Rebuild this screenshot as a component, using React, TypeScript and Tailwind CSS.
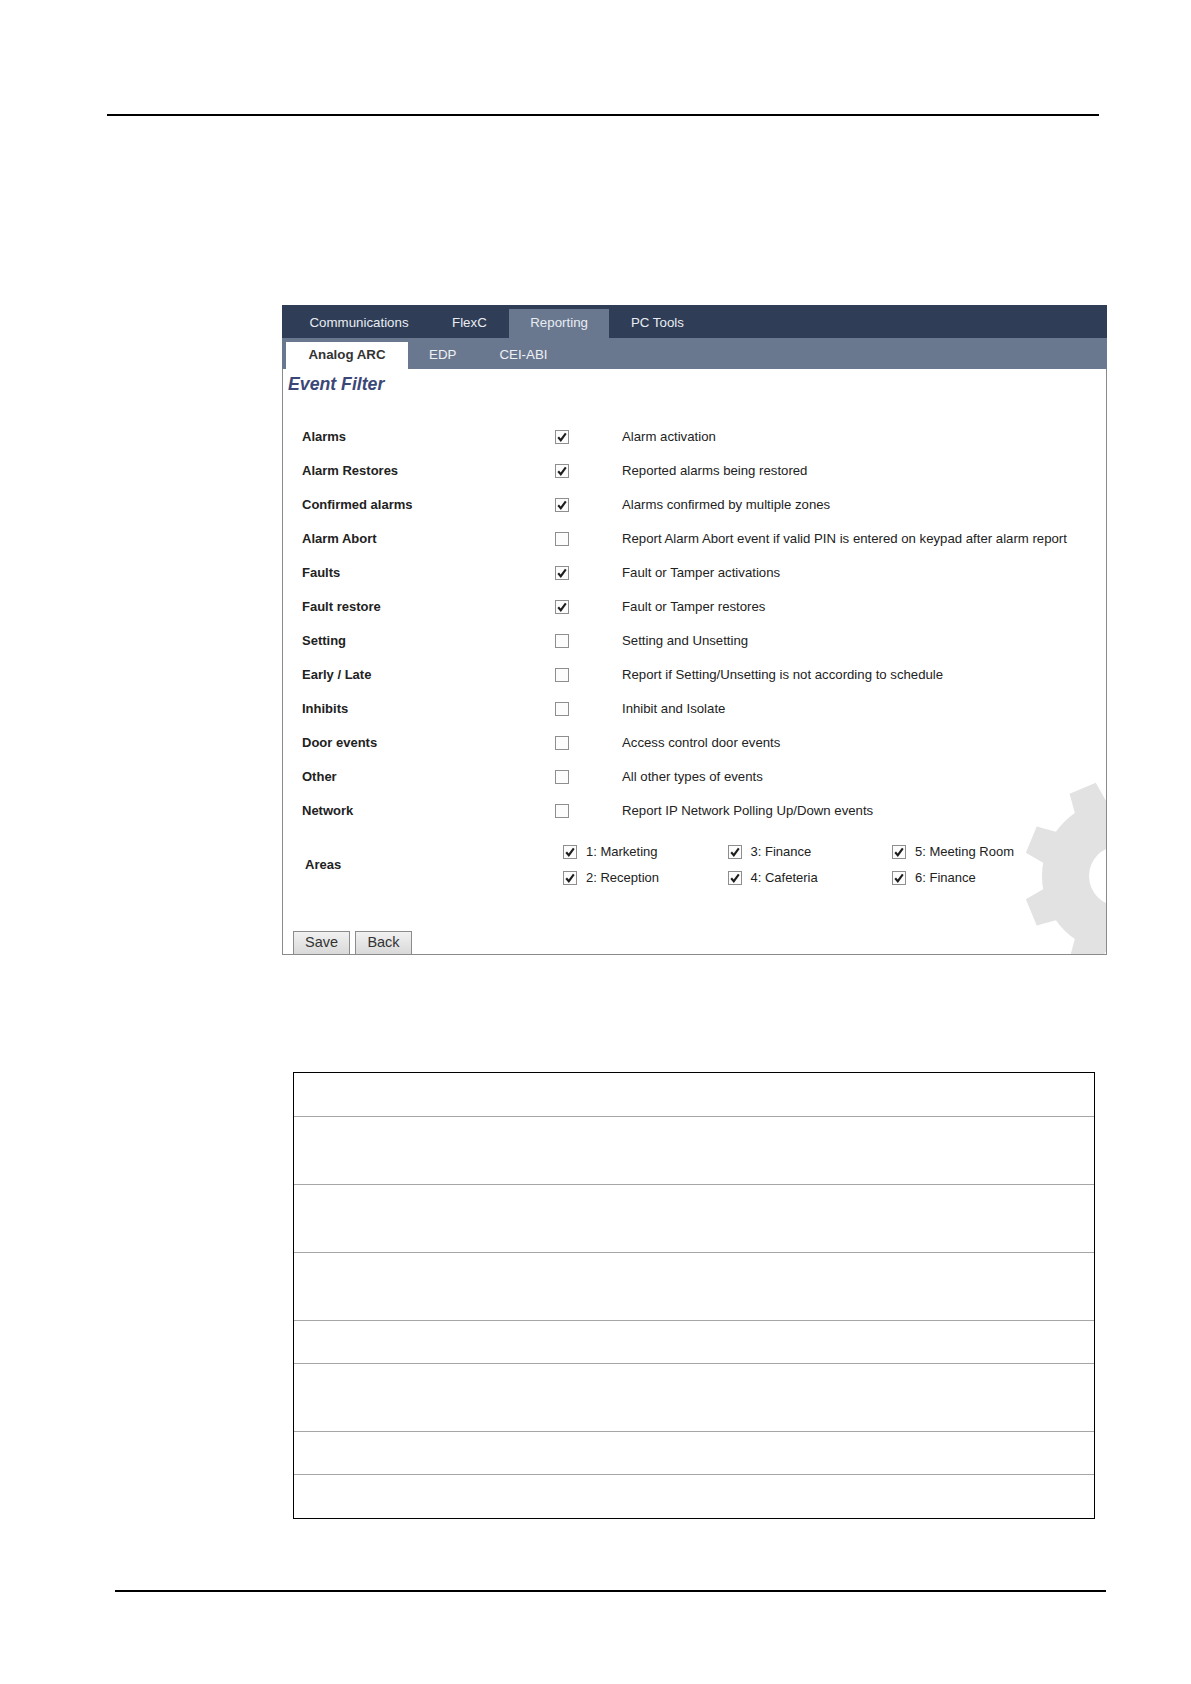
import React from "react";

const rows = [
  { label: "Alarms", checked: true, desc: "Alarm activation" },
  { label: "Alarm Restores", checked: true, desc: "Reported alarms being restored" },
  { label: "Confirmed alarms", checked: true, desc: "Alarms confirmed by multiple zones" },
  { label: "Alarm Abort", checked: false, desc: "Report Alarm Abort event if valid PIN is entered on keypad after alarm report" },
  { label: "Faults", checked: true, desc: "Fault or Tamper activations" },
  { label: "Fault restore", checked: true, desc: "Fault or Tamper restores" },
  { label: "Setting", checked: false, desc: "Setting and Unsetting" },
  { label: "Early / Late", checked: false, desc: "Report if Setting/Unsetting is not according to schedule" },
  { label: "Inhibits", checked: false, desc: "Inhibit and Isolate" },
  { label: "Door events", checked: false, desc: "Access control door events" },
  { label: "Other", checked: false, desc: "All other types of events" },
  { label: "Network", checked: false, desc: "Report IP Network Polling Up/Down events" },
];

const areas = [
  ["1: Marketing", "3: Finance", "5: Meeting Room"],
  ["2: Reception", "4: Cafeteria", "6: Finance"],
];

const tableRows = [44, 68, 68, 68, 43, 68, 43, 43];

const Checkbox: React.FC<{ checked: boolean }> = ({ checked }) => (
  <svg width="14" height="14" viewBox="0 0 14 14" className="block">
    <rect x="0.5" y="0.5" width="13" height="13" fill="#fcfcfc" stroke="#8e8e8e" />
    {checked && (
      <path d="M3.2 7.2 L5.8 10.2 L10.8 3.4" fill="none" stroke="#1e1e1e" strokeWidth="2.1" />
    )}
  </svg>
);

// gear outline, 8 teeth, drawn around (100,100)
const gearPath = (() => {
  const cx = 100;
  const cy = 100;
  const ro = 96;
  const rb = 77;
  const rad = (d: number) => (d * Math.PI) / 180;
  const pt = (r: number, a: number) =>
    `${(cx + r * Math.cos(rad(a))).toFixed(2)} ${(cy + r * Math.sin(rad(a))).toFixed(2)}`;
  let d = "";
  for (let i = 0; i < 8; i++) {
    const t = 22.5 + 45 * i;
    const b0 = t - 12.5;
    const b1 = t + 12.5;
    if (i === 0) d += `M ${pt(rb, b0)} `;
    else d += `A ${rb} ${rb} 0 0 1 ${pt(rb, b0)} `;
    d += `L ${pt(ro, t - 8.5)} L ${pt(ro, t + 8.5)} L ${pt(rb, b1)} `;
  }
  d += `A ${rb} ${rb} 0 0 1 ${pt(rb, 10)} Z `;
  d += `M ${cx + 30} ${cy} A 30 30 0 1 0 ${cx - 30} ${cy} A 30 30 0 1 0 ${cx + 30} ${cy} Z`;
  return d;
})();

const App: React.FC = () => {
  return (
    <div className="w-[1191px] h-[1684px] bg-white font-['Liberation_Sans',Arial,sans-serif] pt-[114px]">
      {/* HEADER RULE */}
      <div className="ml-[107px] w-[992px] h-[1.5px] bg-black" />

      {/* PANEL */}
      <div className="ml-[282px] w-[825px] mt-[189px]">
        <div className="h-[33px] bg-[#2f3d56] flex items-end pl-[6px] text-[13.3px] text-[#e9edf3]">
          <div className="h-full flex items-center px-[21.5px] pt-[3px]">Communications</div>
          <div className="h-full flex items-center px-[22px] pt-[3px]">FlexC</div>
          <div className="h-[29px] flex items-center px-[21.5px] bg-[#6a788f] pb-[1px]">Reporting</div>
          <div className="h-full flex items-center px-[21.5px] pt-[3px]">PC Tools</div>
        </div>
        <div className="h-[31px] bg-[#6a788f] flex items-end pl-[4px] text-[13.3px] text-[#eef1f5]">
          <div className="h-[27px] flex items-center px-[22.5px] bg-white font-bold text-[#333]">Analog ARC</div>
          <div className="h-full flex items-center px-[21px] pt-[3px]">EDP</div>
          <div className="h-full flex items-center px-[22px] pt-[3px]">CEI-ABI</div>
        </div>

        <div className="relative h-[586px] bg-white border-x border-b border-[#8a8a8a] overflow-hidden">
          <svg
            width="200"
            height="200"
            viewBox="0 0 200 200"
            className="absolute left-[736px] top-[407px]"
          >
            <path d={gearPath} fill="#e2e2e2" fillRule="evenodd" />
          </svg>

          <div className="relative">
            <h2 className="pt-[4px] pl-[5px] text-[17.7px] leading-[22px] font-bold italic text-[#3b4877]">
              Event Filter
            </h2>

            <div className="mt-[25px]">
              {rows.map((row, index) => (
                <div key={index} className="h-[34px] flex items-center text-[#222]">
                  <div className="w-[272px] pl-[19px] font-bold text-[13px]">{row.label}</div>
                  <div className="w-[67px]">
                    <Checkbox checked={row.checked} />
                  </div>
                  <div className="text-[13.2px]">{row.desc}</div>
                </div>
              ))}
            </div>

            {/* AREAS */}
            <div className="mt-[11px] flex items-center">
              <div className="w-[280px] pl-[22px] text-[13px] font-bold text-[#222]">Areas</div>
              <div>
                {areas.map((line, index) => (
                  <div key={index} className="h-[26px] flex items-center">
                    {line.map((name) => (
                      <div key={name} className="w-[164.5px] flex items-center gap-[9px] text-[13px] text-[#222]">
                        <Checkbox checked={true} />
                        <span>{name}</span>
                      </div>
                    ))}
                  </div>
                ))}
              </div>
            </div>

            {/* BUTTONS */}
            <div className="mt-[40px] pl-[10px] flex gap-[5px]">
              <button className="w-[57px] h-[24px] border border-[#8c8c8c] bg-gradient-to-b from-[#f1f1f1] to-[#d9d9d9] text-[14.5px] text-[#333]">
                Save
              </button>
              <button className="w-[57px] h-[24px] border border-[#8c8c8c] bg-gradient-to-b from-[#f1f1f1] to-[#d9d9d9] text-[14.5px] text-[#333]">
                Back
              </button>
            </div>
          </div>
        </div>
      </div>

      {/* TABLE */}
      <div className="ml-[293px] w-[802px] mt-[117px] border-[1.5px] border-black">
        {tableRows.map((h, index) => (
          <div
            key={index}
            style={{ height: h }}
            className={index < tableRows.length - 1 ? "border-b border-[#a6a6a6]" : ""}
          />
        ))}
      </div>

      {/* FOOTER RULE */}
      <div className="ml-[115px] w-[991px] h-[2.5px] bg-black mt-[71px]" />
    </div>
  );
};

export default App;
